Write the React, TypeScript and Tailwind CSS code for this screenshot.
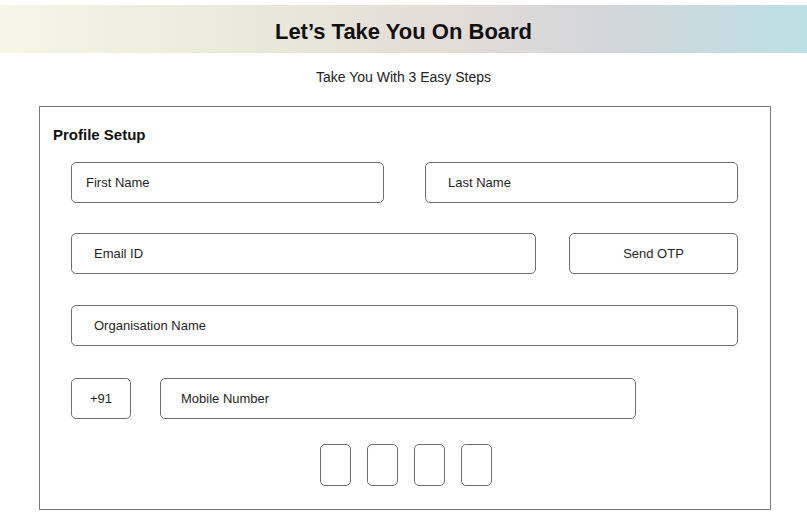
const font = { fontFamily: '"Liberation Sans", Arial, sans-serif' }

function Field({ label, className = '', center = false, pad = 'pl-[22px]' }: { label: string; className?: string; center?: boolean; pad?: string }) {
  return (
    <div
      className={`h-[41px] pt-[1px] border border-[#6e6e6e] rounded-[5px] flex items-center text-[13px] text-[#1f1f1f] ${center ? 'justify-center' : pad} ${className}`}
    >
      {label}
    </div>
  )
}

export default function App() {
  return (
    <div className="w-[807px] h-[524px] bg-white overflow-hidden" style={font}>
      <div className="pt-[5px]">
        <div className="h-[48px] pt-[4px] flex items-center justify-center bg-[linear-gradient(90deg,#f5f6e8_0%,#e9eadb_30%,#e4dcd6_55%,#d3d6da_75%,#bde0e4_100%)]">
          <h1 className="text-[22px] font-bold text-[#111]">Let’s Take You On Board</h1>
        </div>
      </div>

      <p className="text-center text-[14px] text-[#222] mt-[14px]">Take You With 3 Easy Steps</p>

      <div className="ml-[39px] mt-[18px] w-[732px] h-[404px] border border-[#7a7a7a] pt-[17px]">
        <h2 className="ml-[13px] text-[15px] font-bold text-[#111]">Profile Setup</h2>

        <div className="ml-[31px] w-[667px] mt-[15px] flex flex-col">
          <div className="flex gap-[41px]">
            <Field label="First Name" className="w-[313px]" pad="pl-[14px]" />
            <Field label="Last Name" className="w-[313px]" />
          </div>

          <div className="flex gap-[33px] mt-[30px]">
            <Field label="Email ID" className="w-[465px]" />
            <Field label="Send OTP" className="w-[169px]" center />
          </div>

          <Field label="Organisation Name" className="w-[667px] mt-[31px]" />

          <div className="flex gap-[29px] mt-[32px]">
            <Field label="+91" className="w-[60px]" center />
            <Field label="Mobile Number" className="w-[476px]" pad="pl-[20px]" />
          </div>

          <div className="flex gap-[16px] mt-[25px] ml-[249px]">
            {[0, 1, 2, 3].map((i) => (
              <div key={i} className="w-[31px] h-[42px] border border-[#6e6e6e] rounded-[5px]" />
            ))}
          </div>
        </div>
      </div>
    </div>
  )
}
